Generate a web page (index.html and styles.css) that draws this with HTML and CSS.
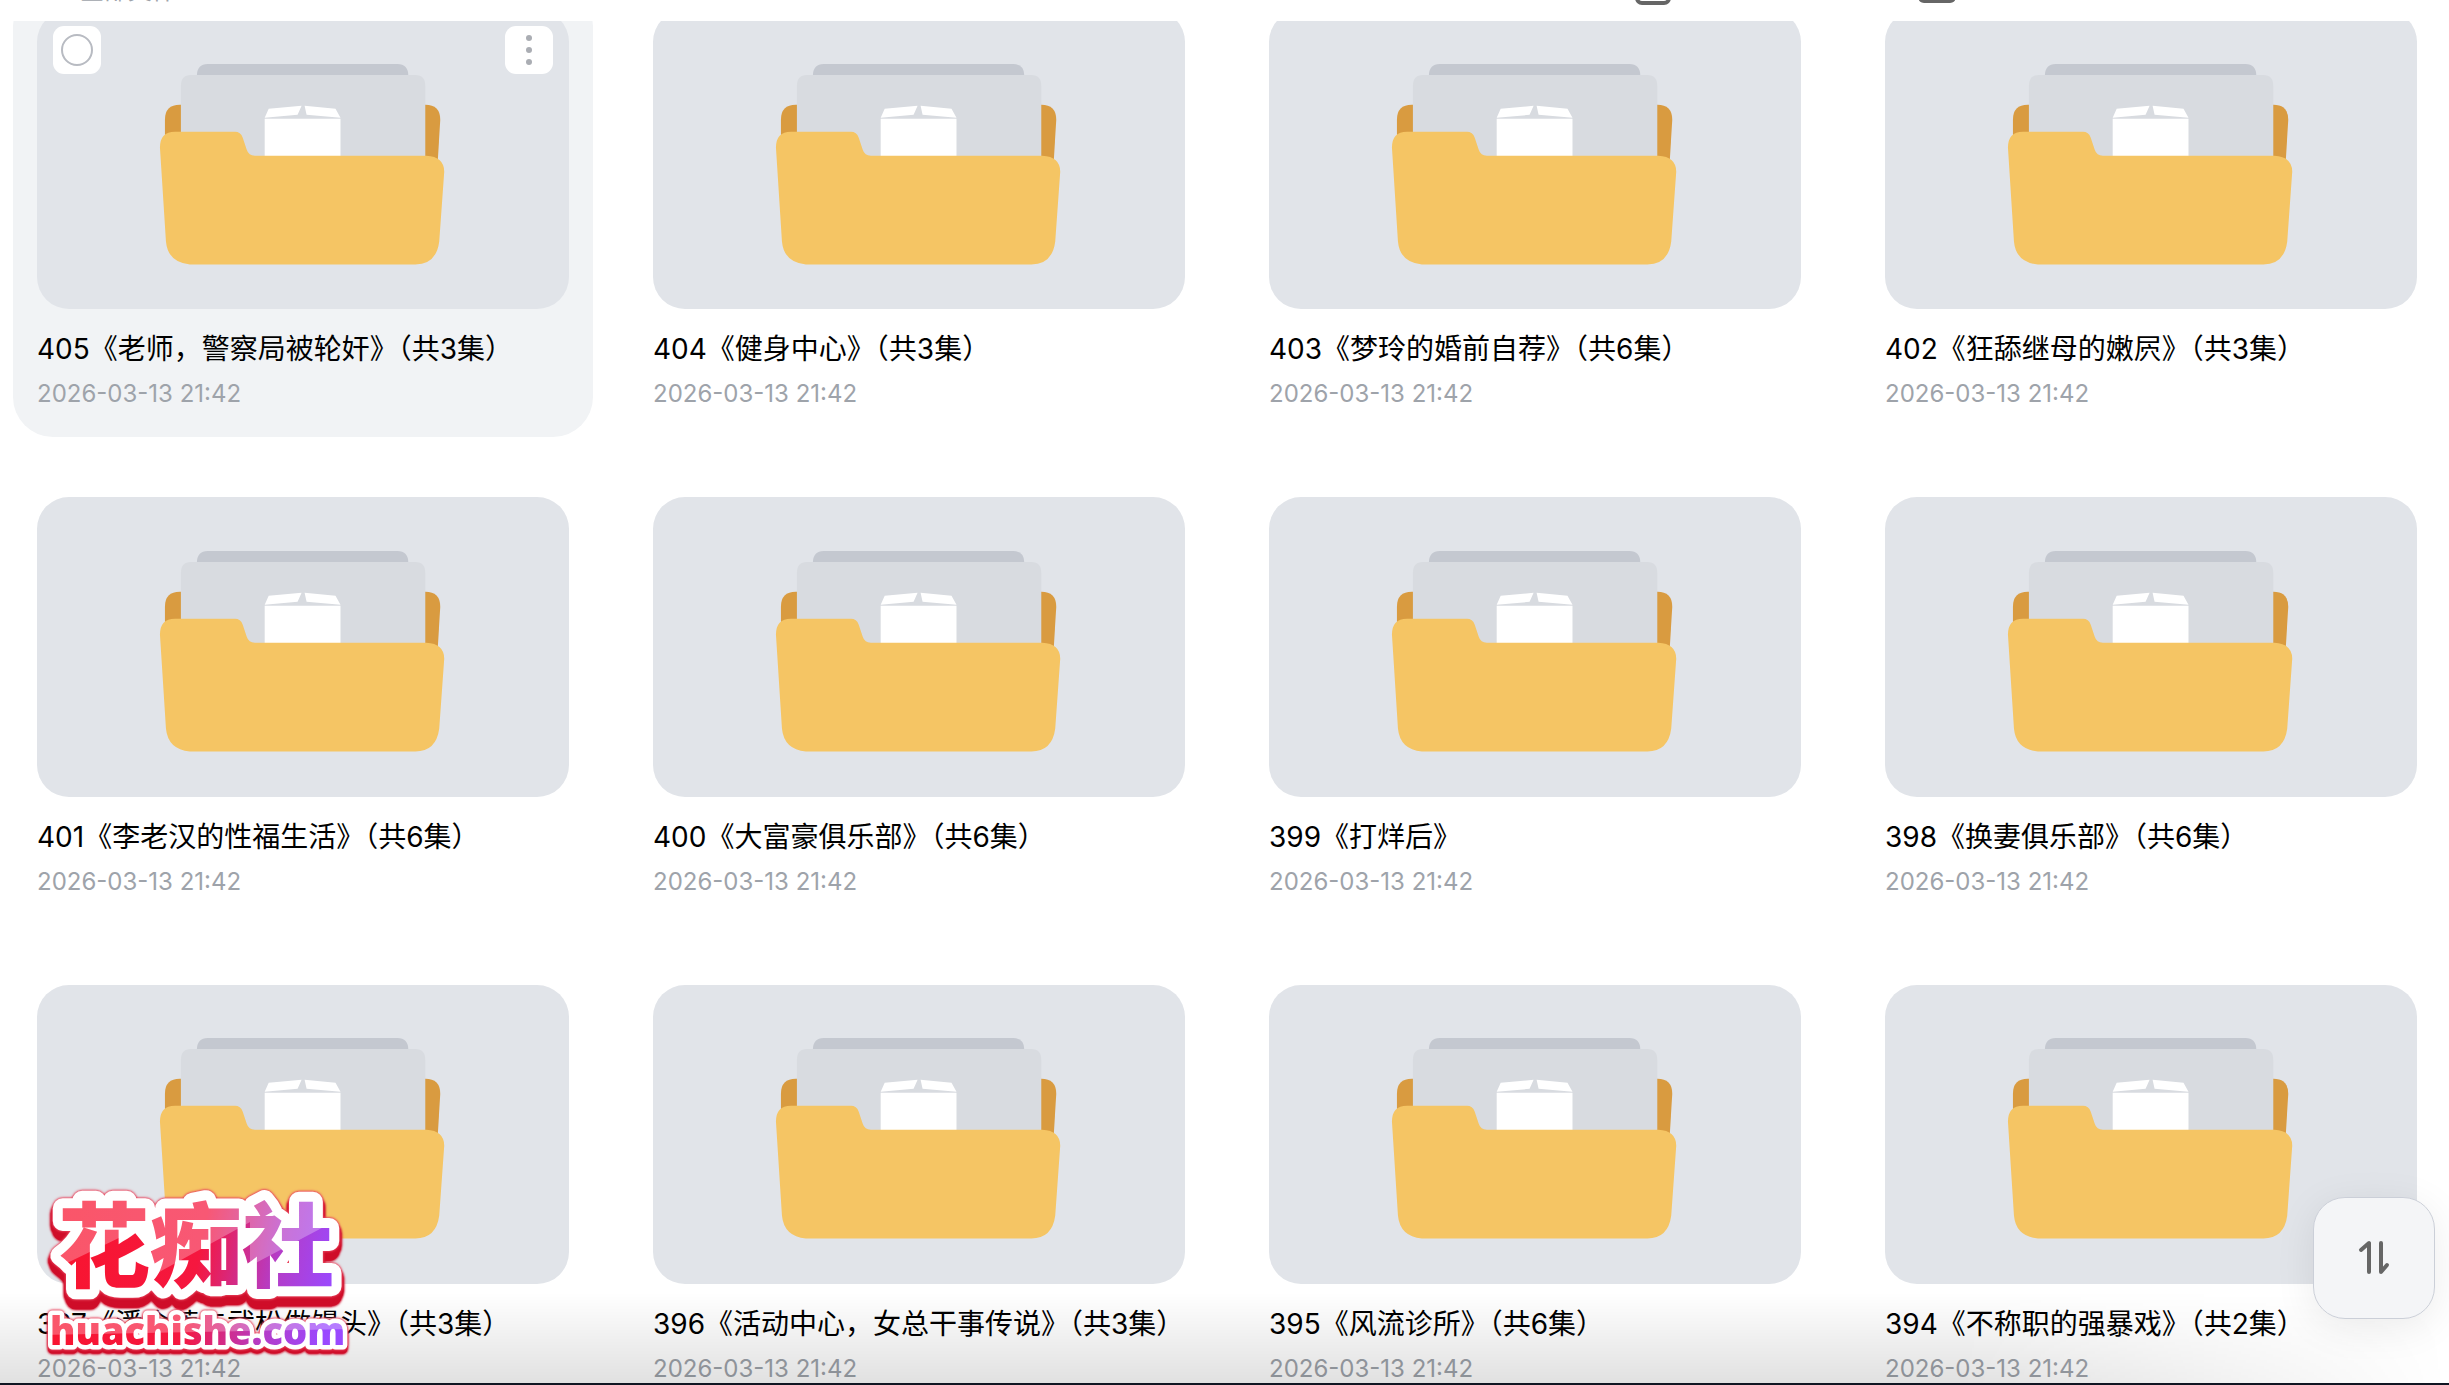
FILE: index.html
```html
<!DOCTYPE html>
<html lang="zh-CN">
<head>
<meta charset="utf-8">
<meta name="viewport" content="width=device-width, initial-scale=1">
<title>文件</title>
<link rel="stylesheet" href="styles.css">
</head>
<body>
<svg class="defs" aria-hidden="true">
  <symbol id="folder" viewBox="3 0 320 240">
    <path fill="#d99b40" d="M25 120V80q0-15 15-15h246q15 0 15 15l-3 50z"/>
    <path fill="#c4c8d0" d="M57 50V36q0-12 11-12h190q11 0 11 12v14z"/>
    <path fill="#d8dbe0" d="M41 120V46q0-11 10-11h225q10 0 10 11v74z"/>
    <path fill="#fff" d="M125 79h76v40h-76zM125 78l4-9 33-3-4 9zM165 66l31 3 5 9-34-3z"/>
    <path fill="#f5c564" d="M20 108q0-16 15-16h60q6 0 8 6l4 12q2 6 8 6h172q18 1 18 16l-5 70q-3 23-24 23H50q-22-2-24-23z"/>
  </symbol>
</svg>
<header class="topbar">
  <span class="crumb">全部文件</span>
  <svg class="tool" width="40" height="44" viewBox="0 0 40 44"><rect x="4" y="8" width="32" height="34" rx="5" fill="none" stroke="#666" stroke-width="4"/></svg>
  <svg class="tool" width="40" height="44" viewBox="0 0 40 44"><rect x="1" y="6" width="38" height="36" rx="6" fill="#666"/></svg>
</header>
<main class="grid"></main>
<div class="shade"></div>
<button class="sort" aria-label="排序"><svg width="32" height="36" viewBox="0 0 32 36" fill="none" stroke="#666" stroke-width="4" stroke-linecap="round" stroke-linejoin="round"><path d="M3 10l8-7v29M23 3v29l6-7"/></svg></button>
<svg class="brand" width="312" height="176" viewBox="0 0 312 176">
  <defs>
    <linearGradient id="ink" gradientUnits="userSpaceOnUse" x1="0" y1="0" x2="300" y2="60"><stop offset="0" stop-color="#f9142c"/><stop offset=".55" stop-color="#f5173f"/><stop offset=".8" stop-color="#b53cc6"/><stop offset="1" stop-color="#9a49ff"/></linearGradient>
    <pattern id="gloss" patternUnits="userSpaceOnUse" width="312" height="176">
      <rect width="312" height="176" fill="url(#ink)"/>
      <path fill="#fff" fill-opacity=".28" d="M0 0h112v30L0 84zM112 0h98v30l-98 54zM210 0h102v20l-102 54zM0 115h312v22L0 143z"/>
    </pattern>
  </defs>
  <text class="brand-name" x="18" y="88">花痴社</text>
  <text class="brand-site" x="10" y="153">huachishe.com</text>
</svg>
<footer class="edge"></footer>
<script src="app.js"></script>
</body>
</html>
```
FILE: styles.css
```css
* { box-sizing: border-box; }
body {
  margin: 0;
  height: 100vh;
  overflow: hidden;
  background: #fff;
  color: #000;
  font-family: Inter, "Noto Sans CJK SC", sans-serif;
}
.defs { position: absolute; width: 0; height: 0; }
.topbar {
  position: fixed;
  z-index: 2;
  top: 0;
  left: 0;
  right: 0;
  height: 21px;
  overflow: hidden;
  display: flex;
  align-items: flex-end;
  padding: 0 492px 16px 80px;
  background: #fff;
}
.crumb { flex: 1; font-size: 24px; line-height: 28px; color: #9ea3aa; }
.tool { margin-left: 244px; }
.grid {
  display: grid;
  grid-template-columns: repeat(4, minmax(0, 1fr));
  gap: 36px;
  margin-top: -14px;
  padding: 0 8px 0 13px;
}
.card { padding: 24px; border-radius: 40px; }
.card.active { background: #f1f3f5; }
.thumb {
  position: relative;
  display: flex;
  align-items: center;
  justify-content: center;
  aspect-ratio: 16 / 9;
  border-radius: 32px;
  background: #e1e4e9;
}
.folder { width: 60%; aspect-ratio: 4 / 3; }
.title {
  margin: 20px 0 0;
  font-size: 28px;
  line-height: 40px;
  font-weight: 400;
  white-space: nowrap;
}
.date { display: block; margin-top: 6px; font-size: 24px; line-height: 38px; color: #9ea3aa; }
.pick, .more {
  position: absolute;
  top: 16px;
  width: 48px;
  height: 48px;
  border: 0;
  border-radius: 11px;
  background: #fff;
}
.pick { left: 16px; display: grid; place-items: center; }
.pick input {
  appearance: none;
  margin: 0;
  width: 32px;
  height: 32px;
  border: 2px solid #b8bbc2;
  border-radius: 50%;
}
.more { right: 16px; padding: 0; display: grid; place-items: center; }
.shade {
  position: fixed;
  left: 0;
  right: 0;
  bottom: 0;
  height: 92px;
  background: linear-gradient(to bottom, transparent, rgba(0, 0, 0, .12));
  mask-image: linear-gradient(to right, #000 80%, transparent);
}
.sort {
  position: fixed;
  right: 14px;
  bottom: 66px;
  width: 122px;
  height: 122px;
  display: grid;
  place-items: center;
  border: 1px solid #cbcfd8;
  border-radius: 32px;
  background: #f4f5f7;
  box-shadow: 0 8px 40px rgba(0, 0, 0, .08);
}
.brand { position: fixed; left: 40px; bottom: 17px; overflow: visible; }
.brand text {
  fill: url(#gloss);
  stroke: #fff;
  stroke-linejoin: round;
  paint-order: stroke;
}
.brand-name {
  font: 900 92px "Noto Sans CJK SC", sans-serif;
  stroke-width: 20px;
  filter: drop-shadow(0 0 1px #e8435c) drop-shadow(0 0 1px #e8435c) drop-shadow(-2px 5px 0 #cf0d29) drop-shadow(2px 5px 0 #cf0d29);
}
.brand-site {
  font: 800 38px "Open Sans", sans-serif;
  stroke-width: 9px;
  filter: drop-shadow(0 0 1px #e8435c) drop-shadow(0 0 1px #e8435c) drop-shadow(0 4px 0 #cf0d29);
}
.edge { position: fixed; left: 0; right: 0; bottom: 0; height: 2px; background: #101522; }
```
FILE: app.js
```js
const titles = [
  "405《老师，警察局被轮奸》（共3集）", "404《健身中心》（共3集）", "403《梦玲的婚前自荐》（共6集）", "402《狂舔继母的嫩屄》（共3集）",
  "401《李老汉的性福生活》（共6集）", "400《大富豪俱乐部》（共6集）", "399《打烊后》", "398《换妻俱乐部》（共6集）",
  "397《潘金莲与武松做馒头》（共3集）", "396《活动中心，女总干事传说》（共3集）", "395《风流诊所》（共6集）", "394《不称职的强暴戏》（共2集）"
];
const controls = `
  <label class="pick"><input type="checkbox" aria-label="选择"></label>
  <button class="more" aria-label="更多"><svg width="8" height="32" viewBox="0 0 8 32" fill="#aaadb3"><circle cx="4" cy="4" r="3"/><circle cx="4" cy="16" r="3"/><circle cx="4" cy="28" r="3"/></svg></button>`;
document.querySelector(".grid").innerHTML = titles.map((title, i) => `
  <article class="card${i ? "" : " active"}">
    <div class="thumb"><svg class="folder"><use href="#folder"/></svg>${i ? "" : controls}</div>
    <h2 class="title">${title}</h2>
    <time class="date">2026-03-13 21:42</time>
  </article>`).join("");
```
